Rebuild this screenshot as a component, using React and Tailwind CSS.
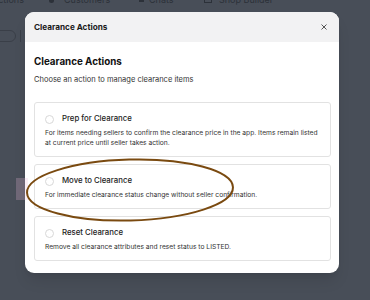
export default function App() {
  const options = [
    {
      title: "Prep for Clearance",
      desc: "For items needing sellers to confirm the clearance price in the app. Items remain listed at current price until seller takes action.",
    },
    {
      title: "Move to Clearance",
      desc: "For immediate clearance status change without seller confirmation.",
    },
    {
      title: "Reset Clearance",
      desc: "Remove all clearance attributes and reset status to LISTED.",
    },
  ];

  return (
    <div
      className="relative w-[370px] h-[300px] overflow-hidden bg-[#484e58]"
      style={{ fontFamily: "Inter, 'Noto Sans', sans-serif" }}
    >
      {/* dimmed page behind */}
      <div className="relative flex items-center h-[12px] -mt-[6px] text-[9px] leading-[12px] text-[#2c3139]">
        <span className="w-[57px] -ml-[8px] pl-[0px]">Actions</span>
        <span className="flex items-center gap-[10px] w-[90px]">
          <span className="w-[5px] h-[5px] rounded-full bg-[#2c3139]" />
          Customers
        </span>
        <span className="flex items-center gap-[5px] w-[65px]">
          <span className="w-[5px] h-[4px] bg-[#2c3139]" />
          Chats
        </span>
        <span className="flex items-center gap-[7px]">
          <span className="w-[8px] h-[5px] border border-[#2c3139]" />
          Shop Builder
        </span>
      </div>

      <div className="flex mt-[6px]">
        <div className="w-[25px] pt-[18px] flex gap-[4px]">
          <div className="w-[17px] h-[12px] shrink-0 -ml-[1px] rounded-r-full border border-[#3a3f48]" />
          <div className="w-[1px] h-[12px] bg-[#3a3f48]" />
        </div>

        <div className="w-[314px] bg-white rounded-[9px] overflow-hidden shadow-lg">
          <div className="h-[30px] bg-[#f2f2f3] flex items-center justify-between pl-[9px] pr-[12px]">
            <span className="text-[8.2px] font-bold text-[#1a1a1a]">Clearance Actions</span>
            <svg width="6" height="6" viewBox="0 0 6 6">
              <path d="M0.5 0.5 L5.5 5.5 M5.5 0.5 L0.5 5.5" stroke="#555" strokeWidth="1" />
            </svg>
          </div>
          <div className="px-[9px] pt-[14px] pb-[12px]">
            <h2 className="text-[9.8px] font-bold text-[#111] leading-[12px]">Clearance Actions</h2>
            <p className="text-[7.5px] text-[#333] mt-[7px] leading-[10px]">
              Choose an action to manage clearance items
            </p>
            <div className="flex flex-col gap-[7px] mt-[17px] mr-[-1px]">
              {options.map((o) => (
                <div
                  key={o.title}
                  className="border border-[#e2e2e2] rounded-[3px] pt-[10px] pb-[8px] pl-[10px] pr-[10px]"
                >
                  <div className="flex items-center gap-[8px] h-[12px]">
                    <span className="w-[9px] h-[9px] shrink-0 rounded-full border border-[#d8d8d8] bg-white" />
                    <span className="text-[7.8px] font-medium text-[#222]">{o.title}</span>
                  </div>
                  <p className="text-[6.7px] text-[#333] leading-[10px] mt-[3px]">{o.desc}</p>
                </div>
              ))}
            </div>
          </div>
        </div>
      </div>

      {/* annotation highlight + ellipse */}
      <div className="absolute left-[16px] top-[178px] w-[12px] h-[22px] bg-[#e8b8d8]/25" />
      <svg className="absolute left-0 top-0" width="370" height="300" viewBox="0 0 370 300">
        <ellipse
          cx="130"
          cy="190"
          rx="103"
          ry="30.5"
          transform="rotate(-1.5 130 190)"
          fill="none"
          stroke="#7a4a10"
          strokeWidth="2"
        />
      </svg>
    </div>
  );
}
